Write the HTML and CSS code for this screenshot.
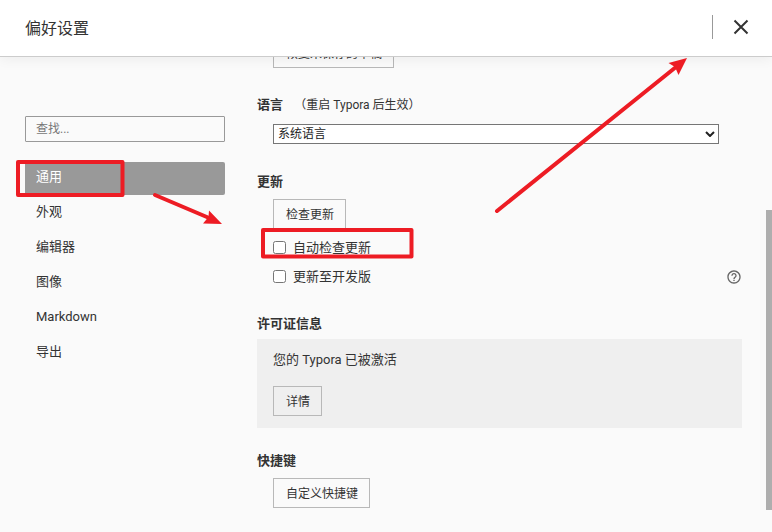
FILE: index.html
```html
<!DOCTYPE html>
<html lang="zh-CN">
<head>
    <meta charset="UTF-8">
    <meta name="viewport" content="width=device-width, initial-scale=1.0">
    <title>偏好设置</title>
    <link rel="stylesheet" href="styles.css">
</head>
<body>

<header>
    <h1>偏好设置</h1>
    <button class="close" type="button" aria-label="关闭">
        <svg width="16" height="16" viewBox="0 0 16 16">
            <path d="M1.5 1.5 L14.5 14.5 M14.5 1.5 L1.5 14.5" stroke="#333" stroke-width="2" fill="none"/>
        </svg>
    </button>
</header>

<div class="main">
    <aside>
        <input class="search" type="text" placeholder="查找..." aria-label="查找">
        <nav>
            <a class="active" href="#general">通用</a>
            <a href="#appearance">外观</a>
            <a href="#editor">编辑器</a>
            <a href="#image">图像</a>
            <a href="#markdown">Markdown</a>
            <a href="#export">导出</a>
        </nav>
    </aside>

    <main id="general">
        <section>
            <button class="btn" type="button">恢复未保存的草稿</button>
        </section>

        <section>
            <h2><label for="language">语言</label> <small>（重启 Typora 后生效）</small></h2>
            <div class="select">
                <select id="language">
                    <option>系统语言</option>
                </select>
                <svg width="10" height="6" viewBox="0 0 10 6">
                    <path d="M1 1 L5 5 L9 1" stroke="#222" stroke-width="2" fill="none"/>
                </svg>
            </div>
        </section>

        <section>
            <h2>更新</h2>
            <button class="btn" type="button">检查更新</button>
            <div class="option">
                <input id="auto-update" type="checkbox">
                <label for="auto-update">自动检查更新</label>
            </div>
            <div class="option">
                <input id="dev-update" type="checkbox">
                <label for="dev-update">更新至开发版</label>
                <button class="help" type="button" aria-label="帮助">
                    <svg width="16" height="16" viewBox="0 0 24 24" fill="#666">
                        <path d="M11 18h2v-2h-2v2zm1-16C6.48 2 2 6.48 2 12s4.480 10 10 10 10-4.480 10-10S17.520 2 12 2zm0 18c-4.410 0-8-3.590-8-8s3.590-8 8-8 8 3.590 8 8-3.590 8-8 8zm0-14c-2.210 0-4 1.790-4 4h2c0-1.100.9-2 2-2s2 .9 2 2c0 2-3 1.750-3 5h2c0-2.250 3-2.500 3-5 0-2.210-1.790-4-4-4z"/>
                    </svg>
                </button>
            </div>
        </section>

        <section>
            <h2>许可证信息</h2>
            <div class="license">
                <p>您的 Typora 已被激活</p>
                <button class="btn" type="button">详情</button>
            </div>
        </section>

        <section>
            <h2>快捷键</h2>
            <button class="btn" type="button">自定义快捷键</button>
        </section>
    </main>
</div>

<div class="scrollbar"></div>

<!-- red marks on top of the window -->
<svg class="marks" width="772" height="532" viewBox="0 0 772 532">
    <g fill="none" stroke="#ed1c24" stroke-width="4" stroke-linejoin="round" stroke-linecap="round">
        <rect x="18" y="162" width="104.500" height="33"/>
        <rect x="263" y="230" width="148.500" height="26.500"/>
        <path d="M155 195 L208 217.500"/>
        <path d="M497 211 L676 67"/>
    </g>
    <g fill="#ed1c24">
        <path d="M222 224 L209 210.500 L208.500 217 L203 223.500 Z"/>
        <path d="M687 58 L668.500 63 L675 67 L678.500 75 Z"/>
    </g>
</svg>

</body>
</html>
```

FILE: styles.css
```css
* {
    box-sizing: border-box;
}

body {
    font-family: Roboto, "Noto Sans CJK SC", sans-serif;
    font-size: 13px;
    line-height: 20px;
    color: #333;
    margin: 0;
    height: 100vh;
    display: flex;
    flex-direction: column;
    overflow: hidden;
    position: relative;
    background-color: #fafafa;
}

header {
    display: flex;
    flex-shrink: 0;
    align-items: center;
    justify-content: space-between;
    height: 57px;
    padding: 0 23px 0 25px;
    background-color: #fff;
    border-bottom: 1px solid #ccc;
    box-shadow: 0 2px 12px rgba(0, 0, 0, 0.06);
    position: relative;
    z-index: 1;
}

h1 {
    margin: 0;
    padding-top: 2px;
    font-size: 16px;
    font-weight: normal;
}

button {
    font-family: inherit;
    color: inherit;
    background: none;
    cursor: pointer;
}

.close {
    display: flex;
    align-items: center;
    height: 24px;
    margin-bottom: 2px;
    padding: 0 0 0 20px;
    border: 0;
    border-left: 1px solid #999;
}

.main {
    display: flex;
    flex: 1;
    gap: 32px;
    min-height: 0;
    padding: 0 30px 0 25px;
}

aside {
    flex: 0 0 200px;
    padding-top: 59px;
}

.search {
    display: block;
    width: 100%;
    height: 26px;
    padding: 0 10px;
    font-family: inherit;
    font-size: 12px;
    color: #333;
    background: none;
    border: 1px solid #999;
    border-radius: 1px;
}

.search::placeholder {
    color: #777;
}

nav {
    margin-top: 20px;
}

nav a {
    display: block;
    height: 33px;
    margin-bottom: 2px;
    padding: 0 11px;
    line-height: 29px;
    color: #333;
    text-decoration: none;
    border-radius: 2px;
}

nav .active {
    color: #fff;
    background-color: #999;
}

/* scrolled a little, so the first button slides under the header */
main {
    flex: 1;
    min-width: 0;
    margin-top: -21px;
}

section {
    display: flow-root;
    margin-bottom: 23px;
}

h2 {
    margin: 0;
    padding-bottom: 5px;
    font-size: 13px;
    font-weight: bold;
    line-height: 20px;
}

h2 small {
    margin-left: 8px;
    font-size: 12px;
    font-weight: normal;
}

.btn {
    display: block;
    height: 30px;
    margin: 2px 0 4px 16px;
    padding: 0 11px 2px 12px;
    font-size: 12px;
    border: 1px solid #b8b8b8;
}

.select {
    position: relative;
    margin: 4px 23px 5px 16px;
}

.select select {
    display: block;
    width: 100%;
    height: 20px;
    padding: 0 4px;
    font-family: inherit;
    font-size: 12px;
    color: #222;
    background-color: #fff;
    border: 1px solid #767676;
    border-radius: 0;
    appearance: none;
}

.select svg {
    position: absolute;
    top: 7px;
    right: 4px;
    pointer-events: none;
}

.option {
    display: flex;
    align-items: center;
    height: 29px;
    margin-left: 16px;
}

.option input {
    width: 13px;
    height: 13px;
    margin: 0 7px 0 0;
}

.help {
    display: flex;
    margin-left: auto;
    padding: 0;
    border: 0;
}

.license {
    display: flow-root;
    padding: 11px 0 8px;
    background-color: #efefef;
}

.license p {
    margin: 0 16px 16px;
}

.scrollbar {
    position: absolute;
    top: 210px;
    right: 0;
    width: 6px;
    height: 300px;
    background-color: #aeaeae;
}

.marks {
    position: absolute;
    top: 0;
    left: 0;
    z-index: 2;
    pointer-events: none;
}
```
